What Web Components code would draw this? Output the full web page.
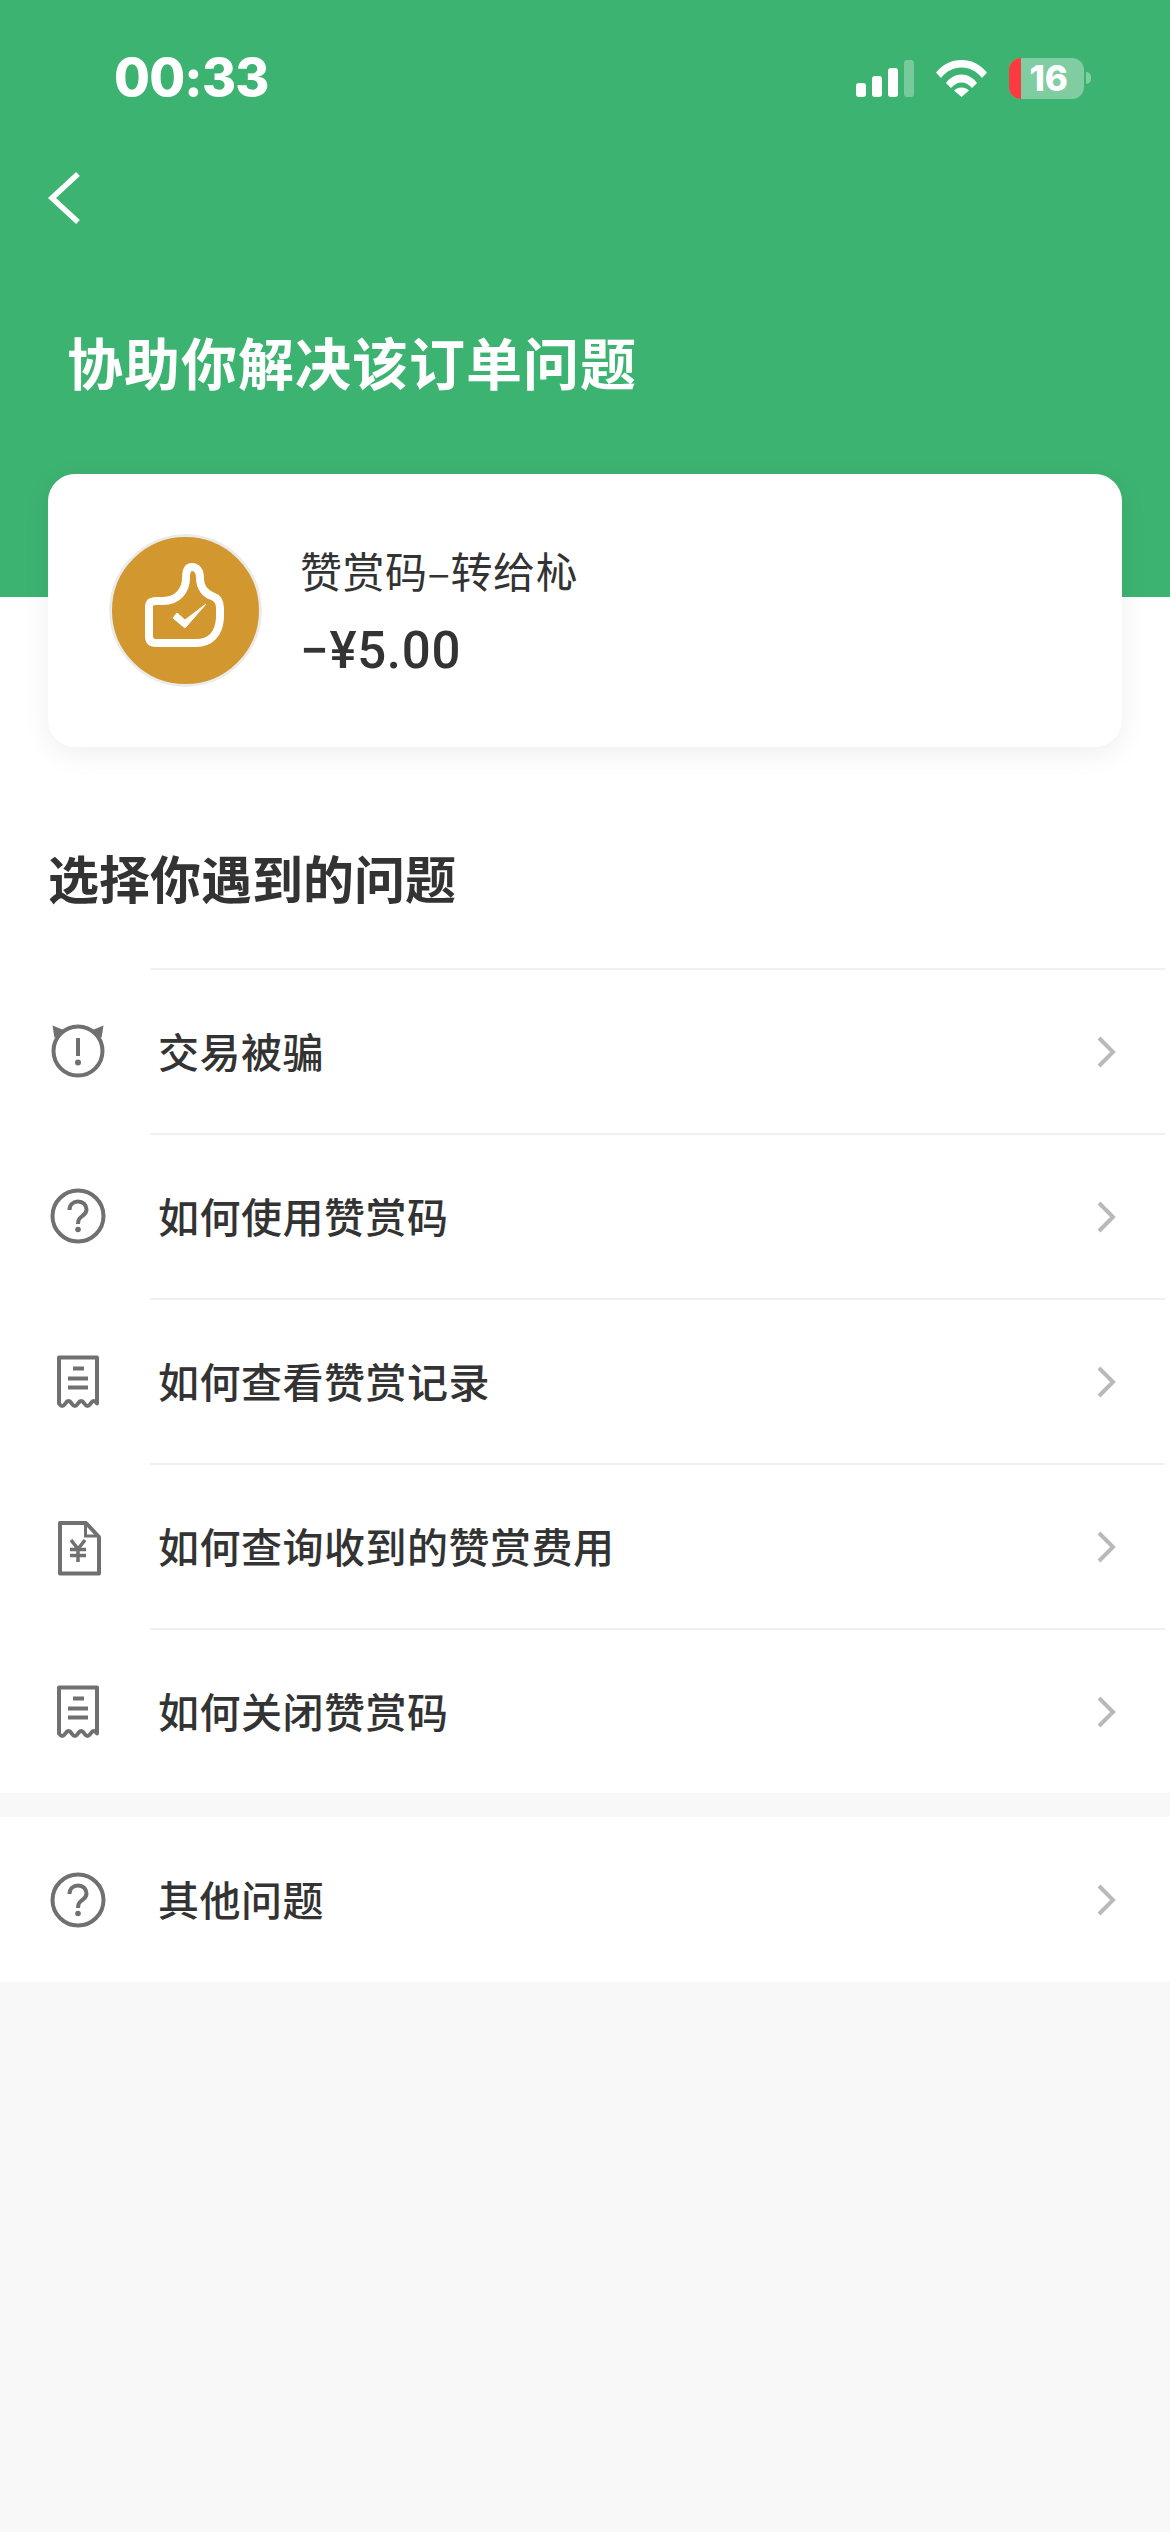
<!DOCTYPE html>
<html lang="zh">
<head>
<meta charset="utf-8">
<title>协助你解决该订单问题</title>
<style>
    html, body {
        margin: 0;
        padding: 0;
        background-color: #f8f8f8;
        font-family: "Noto Sans CJK SC", "Noto Sans", sans-serif;
        color: #333;
    }
</style>
</head>
<body>
<help-page></help-page>

<script>
// Barra de estado
class StatusBar extends HTMLElement {
    constructor() {
        super();
        this.attachShadow({ mode: 'open' });
        this.shadowRoot.innerHTML = `
            <style>
                :host {
                    display: flex;
                    align-items: center;
                    height: 156px;
                    padding: 0 79px 0 114px;
                    color: #fff;
                }
                .time {
                    flex: 1;
                    font: 800 52px/60px Inter, "Liberation Sans", sans-serif;
                    letter-spacing: -.8px;
                }
                svg { display: block; }
                .wifi { margin: 0 22px 0 22px; }
                .battery {
                    position: relative;
                    width: 75px;
                    height: 41px;
                    border-radius: 12px;
                    background-color: rgba(255, 255, 255, .35);
                    text-align: right;
                    padding-right: 16px;
                    box-sizing: border-box;
                    font: 800 35px/41px Inter, "Liberation Sans", sans-serif;
                }
                .battery .low {
                    position: absolute;
                    left: 0;
                    top: 0;
                    bottom: 0;
                    width: 12px;
                    border-radius: 12px 0 0 12px;
                    background-color: #fc3a3f;
                }
                .tip {
                    width: 5px;
                    height: 12px;
                    margin-left: 2px;
                    border-radius: 0 6px 6px 0;
                    background-color: rgba(255, 255, 255, .35);
                }
            </style>
            <div class="time">00:33</div>
            <svg width="58" height="37" viewBox="0 0 58 37" fill="#fff">
                <rect x="0" y="23" width="10" height="14" rx="3"/>
                <rect x="16" y="16" width="10" height="21" rx="3"/>
                <rect x="32" y="8" width="10" height="29" rx="3"/>
                <rect x="48" y="0" width="10" height="37" rx="3" opacity=".3"/>
            </svg>
            <svg class="wifi" width="51" height="37" viewBox="0 0 51 37" fill="#fff">
                <path d="M0 12.5C6.5 4.5 15.5 0 25.5 0S44.500 4.500 51 12.500L46 18C40.500 11 33.500 7.500 25.500 7.500S10.500 11 5 18Z"/>
                <path d="M10 23C14 17.500 19.500 14.500 25.500 14.500S37 17.500 41 23L36 28C33 24.500 29.500 22.500 25.500 22.500S18 24.500 15 28Z"/>
                <path d="M18 30.500C20 28.500 22.500 27.500 25.500 27.500S31 28.500 33 30.500L25.500 37Z"/>
            </svg>
            <div class="battery"><div class="low"></div>16</div>
            <div class="tip"></div>
        `;
    }
}

// Cabecera verde
class HelpHeader extends HTMLElement {
    constructor() {
        super();
        this.attachShadow({ mode: 'open' });
        this.shadowRoot.innerHTML = `
            <style>
                :host {
                    display: block;
                    height: 597px;
                    background-color: #3db371;
                    color: #fff;
                }
                .back {
                    display: block;
                    margin: 14px 0 0 46px;
                }
                h1 {
                    margin: 95px 0 0 67px;
                    font-size: 56px;
                    line-height: 80px;
                    font-weight: 700;
                    letter-spacing: 1px;
                }
            </style>
            <status-bar></status-bar>
            <svg class="back" width="36" height="56" viewBox="0 0 36 56" fill="none" stroke="#fff" stroke-width="5.500">
                <path d="M32 4L6 28L32 52"/>
            </svg>
            <h1><slot></slot></h1>
        `;
    }
}

// Tarjeta del pedido
class OrderCard extends HTMLElement {
    constructor() {
        super();
        this.attachShadow({ mode: 'open' });
        this.shadowRoot.innerHTML = `
            <style>
                :host {
                    display: flex;
                    align-items: center;
                    position: relative;
                    height: 273px;
                    margin: -123px 48px 0 48px;
                    padding-left: 61px;
                    background-color: #fff;
                    border-radius: 27px;
                    box-shadow: 0 6px 28px rgba(0, 0, 0, .07);
                }
                .avatar {
                    flex: none;
                    width: 153px;
                    height: 153px;
                    border-radius: 50%;
                    margin-right: 38px;
                }
                .name {
                    font-size: 42px;
                    line-height: 60px;
                    letter-spacing: .5px;
                    color: #333;
                }
                .amount {
                    margin-top: 21px;
                    font: 500 51px/60px Roboto, "Liberation Sans", sans-serif;
                    letter-spacing: .7px;
                    color: #333;
                }
            </style>
            <svg class="avatar" viewBox="109 534 153 153">
                <circle cx="185.500" cy="610.500" r="75" fill="#d2982f" stroke="#ebebeb" stroke-width="3"/>
                <path d="M149 636V607Q149 601 156 601H163C178 601 186 590 186 578C186 570 188 567 192 567C197 567 200 571 200 578C200 588 206 594 212 596C218 598 220 602 220 608V618C219 634 210 643 196 643H156Q149 643 149 636Z" fill="none" stroke="#fff" stroke-width="8" stroke-linejoin="round"/>
                <path d="M173 618L177 613L185 620L206 604L185 628Z" fill="#fff" stroke="#fff" stroke-width="1" stroke-linejoin="round"/>
            </svg>
            <div>
                <div class="name"><slot name="name"></slot></div>
                <div class="amount"><slot name="amount"></slot></div>
            </div>
        `;
    }
}

const ROW_ICONS = {
    alert: `
        <circle cx="30" cy="30" r="24.500"/>
        <path d="M4.500 4.500L15.500 9L6.500 17Z M55.500 4.500L44.500 9L53.500 17Z" fill="#707070" stroke="none"/>
        <path d="M30 17V35"/>
        <circle cx="30" cy="41.500" r="3" fill="#707070" stroke="none"/>
    `,
    question: `
        <circle cx="30" cy="30" r="25.500"/>
        <path d="M21.500 24C21.500 18.500 25.500 15.500 30 15.500C35 15.500 38.500 19 38.500 23.500C38.500 28 35 29.500 32.500 31.500C30.500 33 30 34.500 30 38"/>
        <circle cx="30" cy="43.500" r="2.800" fill="#707070" stroke="none"/>
    `,
    receipt: `
        <path stroke-linejoin="round" d="M11 6.500H49V52.500q-3.170-5-6.330 0q-3.170 5-6.330 0q-3.170-5-6.330 0q-3.170 5-6.330 0q-3.170-5-6.330 0q-3.170 5-6.330 0Z"/>
        <path d="M25 17.500H36M20 27.500H40M20 36.500H40"/>
    `,
    bill: `
        <path stroke-linejoin="round" d="M12 7H38L51 21V57.500H12Z"/>
        <path d="M37.500 8V20H50" stroke-width="3"/>
        <path d="M23 24L30 33L37 24M22 33.500H38M22 39.500H38M30 33V46" stroke-width="3.500"/>
    `
};

// Fila de la lista
class HelpRow extends HTMLElement {
    constructor() {
        super();
        this.attachShadow({ mode: 'open' });
    }

    connectedCallback() {
        const icon = ROW_ICONS[this.getAttribute('icon')] || '';
        this.shadowRoot.innerHTML = `
            <style>
                :host {
                    display: flex;
                    align-items: center;
                    height: 165px;
                    background-color: #fff;
                }
                .icon {
                    flex: none;
                    margin: 0 42px 0 48px;
                    overflow: visible;
                }
                .body {
                    flex: 1;
                    align-self: stretch;
                    display: flex;
                    align-items: center;
                    box-sizing: border-box;
                    margin-right: 5px;
                    padding: 0 48px 0 8px;
                    border-top: 2px solid #f0f0f0;
                }
                :host([plain]) .body { border-top: none; }
                .text {
                    flex: 1;
                    font-size: 41px;
                    line-height: 60px;
                    padding-bottom: 4px;
                    font-weight: 500;
                    letter-spacing: .5px;
                    color: #333;
                }
            </style>
            <svg class="icon" width="60" height="60" viewBox="0 0 60 60" fill="none" stroke="#707070" stroke-width="4">${icon}</svg>
            <div class="body">
                <div class="text"><slot></slot></div>
                <svg width="20" height="32" viewBox="0 0 20 32" fill="none" stroke="#b9b9b9" stroke-width="4">
                    <path d="M2 2L16 16L2 30"/>
                </svg>
            </div>
        `;
    }
}

// Pagina completa
class HelpPage extends HTMLElement {
    constructor() {
        super();
        this.attachShadow({ mode: 'open' });
        this.shadowRoot.innerHTML = `
            <style>
                :host {
                    display: block;
                    background-color: #f8f8f8;
                }
                .top {
                    background-color: #fff;
                }
                h2 {
                    margin: 0;
                    padding: 95px 0 56px 48px;
                    font-size: 51px;
                    line-height: 70px;
                    font-weight: 700;
                    color: #333;
                }
                .other { margin-top: 24px; }
            </style>
            <div class="top">
                <help-header>协助你解决该订单问题</help-header>
                <order-card>
                    <span slot="name">赞赏码–转给杺</span>
                    <span slot="amount">−¥5.00</span>
                </order-card>
                <h2>选择你遇到的问题</h2>
                <help-row icon="alert">交易被骗</help-row>
                <help-row icon="question">如何使用赞赏码</help-row>
                <help-row icon="receipt">如何查看赞赏记录</help-row>
                <help-row icon="bill">如何查询收到的赞赏费用</help-row>
                <help-row icon="receipt">如何关闭赞赏码</help-row>
            </div>
            <div class="other">
                <help-row icon="question" plain>其他问题</help-row>
            </div>
        `;
    }
}

customElements.define('status-bar', StatusBar);
customElements.define('help-header', HelpHeader);
customElements.define('order-card', OrderCard);
customElements.define('help-row', HelpRow);
customElements.define('help-page', HelpPage);
</script>
</body>
</html>
